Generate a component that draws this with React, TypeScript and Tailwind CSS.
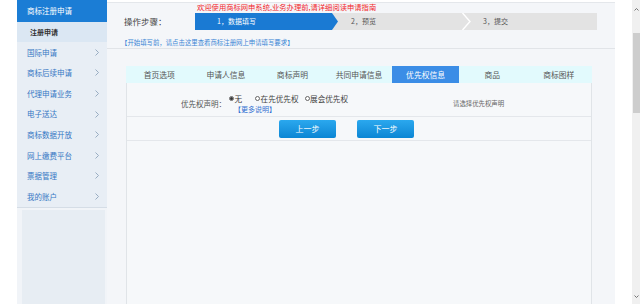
import React from "react";

const items = ["国际申请", "商标后续申请", "代理申请业务", "电子送达", "商标数据开放", "网上缴费平台", "票据管理", "我的账户"];
const tabs = ["首页选项", "申请人信息", "商标声明", "共同申请信息", "优先权信息", "商品", "商标图样"];

function Chevron() {
  return (
    <svg width="4" height="7" viewBox="0 0 4 7" className="shrink-0">
      <polyline points="0.5,0.5 3.5,3.5 0.5,6.5" fill="none" stroke="#8fa4bb" strokeWidth="0.9" />
    </svg>
  );
}

function Radio({ checked }: { checked?: boolean }) {
  return (
    <span className="w-[5px] h-[5px] rounded-full border-[0.8px] border-[#666] flex items-center justify-center shrink-0 bg-white">
      {checked && <span className="w-[2.4px] h-[2.4px] rounded-full bg-[#333]" />}
    </span>
  );
}

function Stepper() {
  return (
    <div className="relative w-[402px] h-[17px] bg-[#e3e3e3] flex text-[7px] leading-[17px]">
      <div className="absolute left-0 top-0 h-[17px] w-[144px] bg-[#1a7ad3] [clip-path:polygon(0_0,137px_0,143px_50%,137px_100%,0_100%)]" />
      <svg width="10" height="17" viewBox="0 0 10 17" className="absolute left-[267px] top-0">
        <polyline points="0.5,0 8,8.5 0.5,17" fill="none" stroke="#ffffff" strokeWidth="1.4" />
      </svg>
      <div className="relative pl-[22px] w-[156px] text-white">1，数据填写</div>
      <div className="relative w-[132px] text-[#555]">2，预览</div>
      <div className="relative text-[#555]">3，提交</div>
    </div>
  );
}

export default function App() {
  return (
    <div className="w-[640px] h-[304px] flex bg-white overflow-hidden font-['Noto_Sans_CJK_SC','Noto_Sans',sans-serif]">
      <div className="w-[17px] shrink-0" />
      {/* Sidebar */}
      <div className="w-[90px] shrink-0 flex flex-col bg-[#f1f4f8]">
        <div className="border-b border-[#d5dde6]">
          <div className="h-[22px] bg-[#1b7dd5] text-white text-[7.5px] pl-[10px] flex items-center">商标注册申请</div>
          <div className="h-[20px] bg-[#dbe7f3] text-[#333] text-[7px] font-bold pl-[13px] flex items-center">注册申请</div>
          {items.map((t) => (
            <div key={t} className="h-[20.6px] bg-[#e8eef5] flex items-center justify-between pl-[10px] pr-[8px] text-[7.5px] text-[#3577c4]">
              <span>{t}</span>
              <Chevron />
            </div>
          ))}
        </div>
        <div className="flex-1 mt-[2px] ml-[5px] mr-[2px] bg-[#e7edf3]" />
      </div>

      {/* Main */}
      <div className="w-[508px] shrink-0 flex flex-col bg-[#f4f6f9]">
        <div className="h-[2px] bg-white" />
        <div className="border-t border-[#e4e7eb]" />
        <div className="border-b border-[#e1e4e8] pb-[1px]">
          <div className="flex items-end pl-[17px]">
            <div className="h-[17px] w-[71px] flex items-center text-[8.5px] text-[#444]">操作步骤：</div>
            <div className="flex flex-col">
              <div className="h-[10px] pl-[2px] text-[7.3px] leading-[8px] text-[#f2262b] whitespace-nowrap">
                欢迎使用商标网申系统,业务办理前,请详细阅读申请指南
              </div>
              <Stepper />
            </div>
          </div>
          <div className="pl-[14px] mt-[9px] h-[8px] leading-[8px] text-[6.4px] text-[#3a85d5] whitespace-nowrap">
            【开始填写前，请点击这里查看商标注册网上申请填写要求】
          </div>
        </div>

        {/* Tabs */}
        <div className="mt-[17px] ml-[19px] w-[466px] h-[17px] bg-[#e2fafd] flex">
          {tabs.map((t) => (
            <div
              key={t}
              className={
                t === "优先权信息"
                  ? "flex-1 flex items-center justify-center text-[7.8px] bg-[#3b8de6] text-white"
                  : "flex-1 flex items-center justify-center text-[7.8px] text-[#555]"
              }
            >
              {t}
            </div>
          ))}
        </div>

        {/* Panel */}
        <div className="ml-[19px] w-[466px] flex-1 border-x border-[#e0e4e8] bg-[#f6f8fa] flex flex-col">
          <div className="h-[34px] border-b border-[#e4e7eb] flex items-center pt-[9px]">
            <div className="w-[99px] text-right text-[7.5px] text-[#555] leading-[10px]">优先权声明：</div>
            <div className="w-[227px] pl-[3px] flex flex-col">
              <div className="flex items-center h-[11px] text-[7.6px] text-[#444]">
                <Radio checked />
                <span className="ml-[0.5px]">无</span>
                <span className="ml-[13px]"><Radio /></span>
                <span className="ml-[0.5px]">在先优先权</span>
                <span className="ml-[6px]"><Radio /></span>
                <span className="ml-[0.5px]">展会优先权</span>
              </div>
              <div className="pl-[5px] h-[11px] leading-[11px] text-[7px] text-[#2f6fd1]">【更多说明】</div>
            </div>
            <div className="text-[6.4px] text-[#666] leading-[10px]">请选择优先权声明</div>
          </div>
          <div className="h-[24px] border-b border-[#e4e7eb] flex items-center pl-[152px] gap-[21px]">
            <div className="w-[57px] h-[18px] rounded-[2px] bg-gradient-to-b from-[#2aa8ee] to-[#0a86d4] text-white text-[8px] flex items-center justify-center">上一步</div>
            <div className="w-[57px] h-[18px] rounded-[2px] bg-gradient-to-b from-[#2aa8ee] to-[#0a86d4] text-white text-[8px] flex items-center justify-center">下一步</div>
          </div>
          <div className="flex-1" />
        </div>
      </div>

      <div className="w-[17px] shrink-0 bg-white" />
      {/* Scrollbar */}
      <div className="w-[8px] shrink-0 bg-[#f0f0f0] flex flex-col items-center">
        <div className="h-[18px] flex items-center">
          <svg width="5" height="3" viewBox="0 0 5 3">
            <polyline points="0.5,2.5 2.5,0.5 4.5,2.5" fill="none" stroke="#666" strokeWidth="0.9" />
          </svg>
        </div>
        <div className="mt-[15px] w-[7px] h-[80px] bg-[#cdcdcd]" />
        <div className="flex-1" />
        <div className="h-[16px] flex items-center">
          <svg width="5" height="3" viewBox="0 0 5 3">
            <polyline points="0.5,0.5 2.5,2.5 4.5,0.5" fill="none" stroke="#666" strokeWidth="0.9" />
          </svg>
        </div>
      </div>
    </div>
  );
}
